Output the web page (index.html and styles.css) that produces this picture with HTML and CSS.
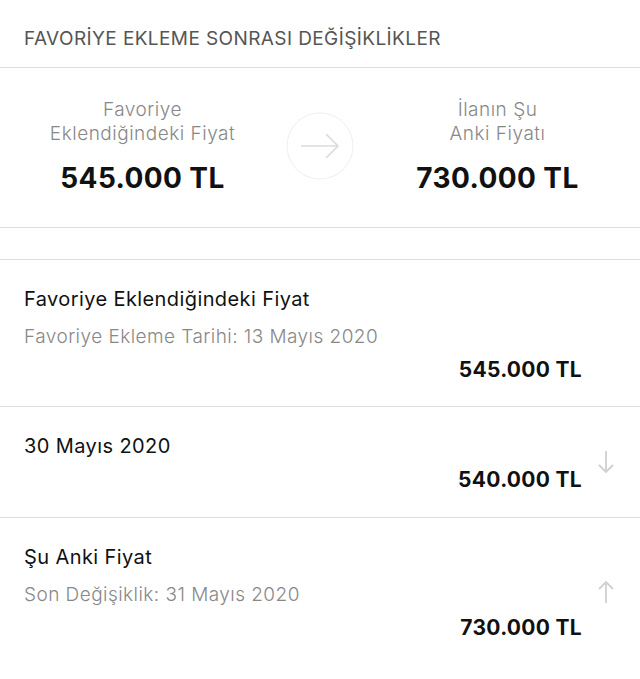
FILE: index.html
```html
<!DOCTYPE html>
<html>
<head>
  <title>Favoriye Ekleme Sonrası Değişiklikler</title>
  <link rel="stylesheet" href="styles.css">
</head>
<body>
  <div class="section-title">FAVORİYE EKLEME SONRASI DEĞİŞİKLİKLER</div>

  <div class="summary">
    <div class="summary-col">
      <div class="summary-label">Favoriye<br>Eklendiğindeki Fiyat</div>
      <div class="summary-price">545.000 TL</div>
    </div>
    <div class="summary-arrow">
      <svg width="70" height="70" viewBox="0 0 70 70">
        <circle cx="35" cy="35" r="33" fill="none" stroke="#efefef" stroke-width="1"/>
        <path d="M16 35 H53 M41 23 L53 35 L41 47" fill="none" stroke="#dcdcdc" stroke-width="1.6"/>
      </svg>
    </div>
    <div class="summary-col">
      <div class="summary-label">İlanın Şu<br>Anki Fiyatı</div>
      <div class="summary-price">730.000 TL</div>
    </div>
  </div>

  <div class="spacer"></div>

  <div class="history">
    <div class="history-row first">
      <div class="history-main">
        <div class="history-title">Favoriye Eklendiğindeki Fiyat</div>
        <div class="history-sub">Favoriye Ekleme Tarihi: 13 Mayıs 2020</div>
        <div class="history-price">545.000 TL</div>
      </div>
      <div class="history-icon"></div>
    </div>

    <div class="history-row">
      <div class="history-main">
        <div class="history-title">30 Mayıs 2020</div>
        <div class="history-price">540.000 TL</div>
      </div>
      <div class="history-icon">
        <svg width="20" height="26" viewBox="0 0 20 26">
          <path d="M10 2 V23 M3 16 L10 23 L17 16" fill="none" stroke="#d0d0d0" stroke-width="1.8"/>
        </svg>
      </div>
    </div>

    <div class="history-row last">
      <div class="history-main">
        <div class="history-title">Şu Anki Fiyat</div>
        <div class="history-sub">Son Değişiklik: 31 Mayıs 2020</div>
        <div class="history-price">730.000 TL</div>
      </div>
      <div class="history-icon">
        <svg width="20" height="26" viewBox="0 0 20 26">
          <path d="M10 24 V3 M3 10 L10 3 L17 10" fill="none" stroke="#d0d0d0" stroke-width="1.8"/>
        </svg>
      </div>
    </div>
  </div>
</body>
</html>
```

FILE: styles.css
```css
body {
  margin: 0;
  background-color: #fff;
  font-family: Inter, "Noto Sans", sans-serif;
  color: #111;
}

.section-title {
  padding: 27px 24px 0;
  height: 40px;
  font-size: 19px;
  letter-spacing: 0.4px;
  color: #555;
  border-bottom: 1px solid #ddd;
}

.summary {
  display: flex;
  align-items: flex-start;
  height: 159px;
  border-bottom: 1px solid #ddd;
}

.summary-col {
  flex: 1;
  text-align: center;
  padding-top: 30px;
}

.summary-label {
  font-size: 19px;
  line-height: 24px;
  letter-spacing: 0.5px;
  color: #888;
  font-weight: 300;
}

.summary-price {
  margin-top: 15px;
  font-size: 28px;
  letter-spacing: 0.4px;
  font-weight: 700;
  color: #111;
}

.summary-arrow {
  padding-top: 43px;
}

.spacer {
  height: 31px;
  border-bottom: 1px solid #ddd;
}

.history-row {
  display: flex;
  border-bottom: 1px solid #ddd;
}

.history-row.last {
  border-bottom: none;
}

.history-main {
  flex: 1;
  padding: 26px 0 24px 24px;
}

.history-row.first .history-main {
  padding-bottom: 23px;
}

.history-title {
  font-size: 20px;
  line-height: 26px;
  letter-spacing: 0.4px;
  color: #111;
}

.history-sub {
  margin-top: 13px;
  font-size: 19px;
  line-height: 24px;
  letter-spacing: 0.45px;
  color: #888;
  font-weight: 300;
}

.history-price {
  margin-top: 8px;
  text-align: right;
  font-size: 21px;
  line-height: 26px;
  letter-spacing: 0.3px;
  font-weight: 700;
}

.history-icon {
  width: 48px;
  margin-right: 10px;
  display: flex;
  align-items: center;
  justify-content: center;
}
```
